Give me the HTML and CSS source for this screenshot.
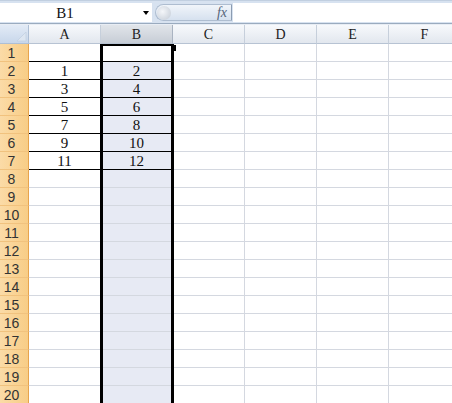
FILE: index.html
```html
<!DOCTYPE html>
<html lang="en">
<head>
    <meta charset="UTF-8">
    <title>Sheet1</title>
    <link rel="stylesheet" href="styles.css">
</head>
<body>
    <div class="formula-bar">
        <div class="name-box">
            <span class="name-text">B1</span>
            <span class="name-arrow"></span>
        </div>
        <div class="fx-pill">
            <span class="knob"></span>
            <span class="fx">fx</span>
        </div>
        <div class="formula-input"></div>
    </div>
    <div class="gap"></div>
    <div class="sheet-wrap">
        <div class="sheet" id="sheet"></div>
        <div class="selection"></div>
        <div class="fill-handle"></div>
    </div>
    <script>
        const cols = ['A', 'B', 'C', 'D', 'E', 'F'];
        const sheet = document.getElementById('sheet');

        function addCell(cls, text) {
            const cell = document.createElement('div');
            cell.className = cls;
            cell.textContent = text;
            sheet.appendChild(cell);
            return cell;
        }

        const corner = addCell('corner', '');
        corner.innerHTML = '<svg width="29" height="18" viewBox="0 0 29 18"><polygon points="26,7 26,16 17,16" fill="#dde6f1" stroke="#c3d1e2" stroke-width="0.8"/></svg>';

        cols.forEach(c => addCell('col-head' + (c === 'B' ? ' selected' : ''), c));

        for (let r = 1; r <= 20; r++) {
            addCell('row-head', r);
            cols.forEach((c, i) => {
                let cls = 'cell';
                let text = '';
                if (c === 'B') cls += r === 1 ? ' active' : ' in-sel';
                if (r === 1 && i < 2) cls += ' box-top';
                if (r >= 2 && r <= 7 && i < 2) {
                    cls += ' boxed';
                    text = (r - 2) * 2 + 1 + i;
                }
                addCell(cls, text);
            });
        }
    </script>
</body>
</html>
```

FILE: styles.css
```css
body {
    margin: 0;
    width: 452px;
    height: 403px;
    overflow: hidden;
    background: #fff;
    font-family: "Liberation Serif", serif;
    color: #111;
}
.formula-bar {
    height: 20px;
    padding-top: 2px;
    background: #d7e2f0;
    border-top: 1px solid #c1cfe0;
    border-bottom: 1px solid #9aabbf;
    display: flex;
}
.name-box {
    width: 152px;
    height: 19px;
    background: #fff;
    display: flex;
    align-items: center;
}
.name-text {
    width: 130px;
    text-align: center;
    font-family: "Liberation Serif", serif;
    font-size: 15px;
    padding-top: 1px;
}
.name-arrow {
    margin-left: 13px;
    width: 0;
    height: 0;
    border-left: 3px solid transparent;
    border-right: 3px solid transparent;
    border-top: 4px solid #000;
}
.fx-pill {
    margin-left: 3px;
    margin-top: 1px;
    width: 77px;
    height: 17px;
    border: 1px solid #aebdd0;
    border-right: 1px solid #8c9cb1;
    border-radius: 9px 0 0 9px;
    background: linear-gradient(#f1f5fa, #d6e1ef);
    display: flex;
    align-items: center;
    justify-content: space-between;
    box-sizing: border-box;
}
.knob {
    width: 14px;
    height: 14px;
    margin-left: 1px;
    border-radius: 50%;
    background: radial-gradient(circle at 40% 40%, #f4f6f9, #c2cad5);
}
.fx {
    font-style: italic;
    font-size: 14px;
    color: #56657a;
    margin-right: 4px;
}
.formula-input {
    flex: 1;
    height: 19px;
    margin-left: 1px;
    background: #fff;
}
.gap {
    height: 1px;
    background: #e8edf4;
}
.sheet-wrap {
    position: relative;
    height: 378px;
    overflow: hidden;
}
.sheet {
    display: grid;
    grid-template-columns: 29px repeat(6, 72px);
    grid-template-rows: 19px repeat(20, 18px);
}
.sheet > div {
    box-sizing: border-box;
    border-right: 1px solid #d4d8e0;
    border-bottom: 1px solid #d4d8e0;
    text-align: center;
    overflow: hidden;
}
.sheet > .corner {
    background: linear-gradient(#e3ebf6, #c8d7eb);
    border-right: 1px solid #aebfd5;
    border-bottom: 1px solid #aebfd5;
}
.corner svg {
    display: block;
}
.sheet > .col-head {
    background: linear-gradient(#f7f9fc, #e2e7ee);
    border-right: 1px solid #c6cfdb;
    border-bottom: 1px solid #b7c3d3;
    font-size: 14px;
    line-height: 19px;
    color: #222;
}
.sheet > .col-head.selected {
    background: linear-gradient(#e1e5ea, #c7cdd6);
    border-right: 1px solid #a9b3c1;
}
.sheet > .row-head {
    background: linear-gradient(to right, #fbdba7, #f8cd86);
    border-right: 1px solid #e7a44d;
    border-bottom: 1px solid #f1c27e;
    font-family: "Liberation Sans", sans-serif;
    font-size: 14px;
    line-height: 18px;
    padding-right: 5px;
    color: #333;
}
.cell {
    font-size: 15px;
    line-height: 18px;
}
.sheet > .in-sel {
    background: #e7eaf4;
}
.sheet > .box-top {
    border-bottom: 1px solid #000;
}
.sheet > .boxed {
    border-right: 1px solid #000;
    border-bottom: 1px solid #000;
}
.selection {
    position: absolute;
    top: 19px;
    left: 100px;
    width: 74px;
    height: 370px;
    box-sizing: border-box;
    border: 2px solid #000;
    border-left-width: 3px;
    border-right-width: 3px;
}
.fill-handle {
    position: absolute;
    top: 20px;
    left: 171px;
    width: 5px;
    height: 6px;
    background: #000;
}
```
